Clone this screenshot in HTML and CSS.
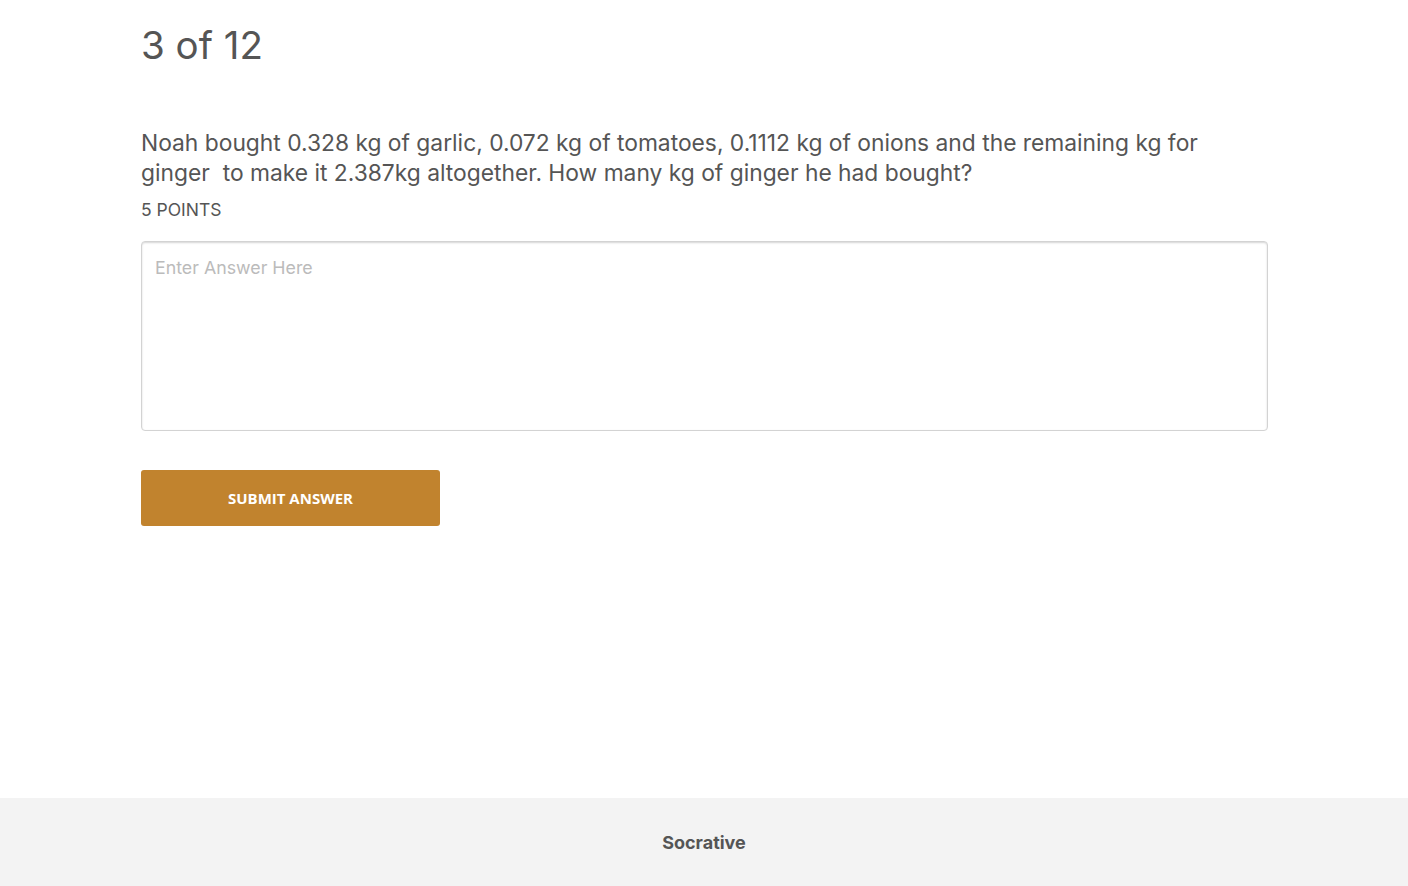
FILE: index.html
```html
<!DOCTYPE html>
<html lang="en">
<head>
<meta charset="utf-8">
<title>Socrative</title>
<link rel="stylesheet" href="styles.css">
</head>
<body>
<div class="page">
  <main class="main">
    <h1 class="counter">3 of 12</h1>
    <div class="question">Noah bought 0.328 kg of garlic, 0.072 kg of tomatoes, 0.1112 kg of onions and the remaining kg for ginger&nbsp; to make it 2.387kg altogether. How many kg of ginger he had bought?</div>
    <div class="points">5 POINTS</div>
    <textarea class="answer" placeholder="Enter Answer Here"></textarea>
    <button class="submit" type="button">SUBMIT ANSWER</button>
  </main>
  <footer class="footer">Socrative</footer>
</div>
</body>
</html>
```
FILE: styles.css
```css
html, body {
  margin: 0;
  padding: 0;
  background: #fff;
}
body {
  font-family: Inter, "Noto Sans", sans-serif;
  color: #555;
}
.page {
  min-height: 100vh;
  display: flex;
  flex-direction: column;
}
.main {
  flex: 1;
  width: 1127px;
  margin-left: 141px;
  display: flex;
  flex-direction: column;
  align-items: flex-start;
}
.counter {
  margin: 21px 0 0;
  font-size: 38.5px;
  font-weight: 400;
  line-height: 48px;
  color: #555;
}
.question {
  margin-top: 59px;
  font-size: 22.8px;
  line-height: 30px;
  color: #555;
}
.points {
  margin-top: 11px;
  font-size: 17.5px;
  line-height: 22px;
  color: #555;
}
.answer {
  margin-top: 20px;
  box-sizing: border-box;
  width: 1127px;
  height: 190px;
  border: 1px solid #d3d3d3;
  border-radius: 4px;
  box-shadow: inset 0 1px 2px #d6d6d6;
  padding: 15px 13px;
  font-family: Inter, "Noto Sans", sans-serif;
  font-size: 17.8px;
  color: #555;
  resize: none;
  outline: none;
}
.answer::placeholder {
  color: #bbb;
}
.submit {
  margin-top: 39px;
  width: 299px;
  height: 56px;
  background: #c1832e;
  border: none;
  border-radius: 3px;
  color: #fff;
  font-family: "Open Sans", sans-serif;
  font-weight: 700;
  font-size: 15px;
  cursor: pointer;
}
.footer {
  height: 88px;
  background: #f3f3f3;
  display: flex;
  align-items: center;
  justify-content: center;
  font-family: Inter, "Noto Sans", sans-serif;
  font-weight: 700;
  font-size: 18px;
  color: #555;
}
```
